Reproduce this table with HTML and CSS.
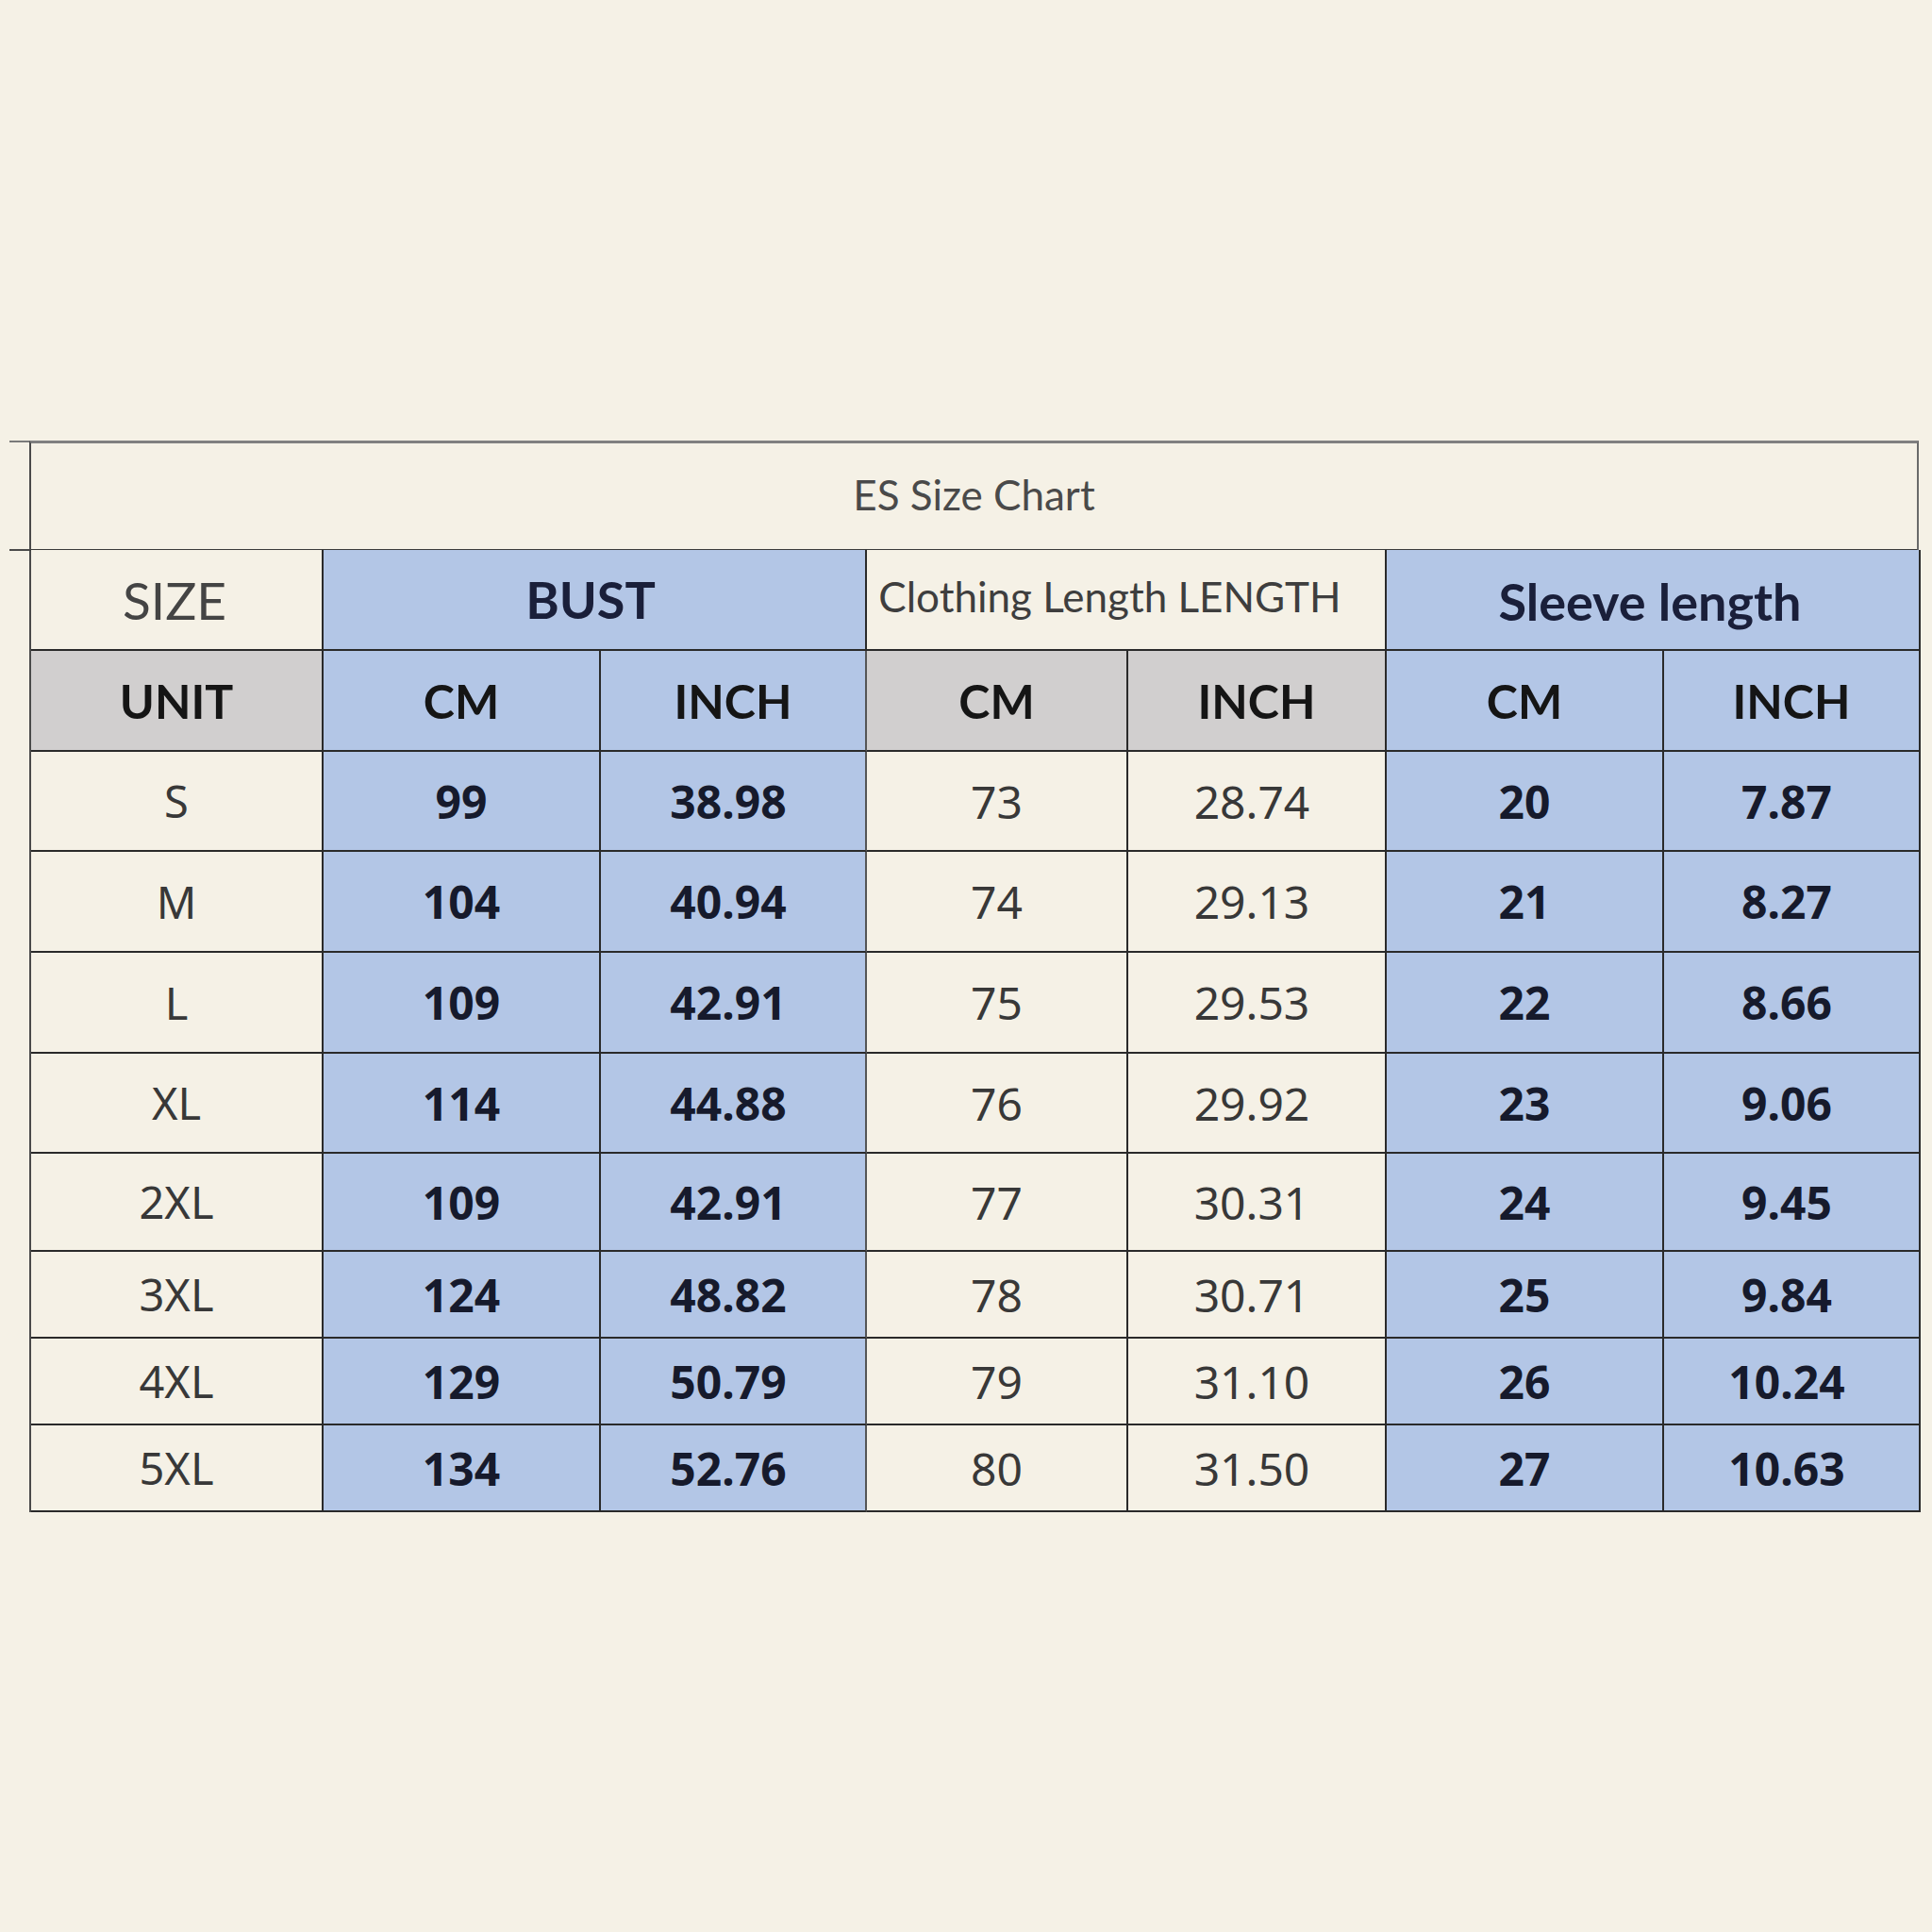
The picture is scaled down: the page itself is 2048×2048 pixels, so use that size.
FILE: index.html
```html
<!DOCTYPE html>
<html>
<head>
<meta charset="utf-8">
<link rel="stylesheet" href="styles.css">
</head>
<body>
<div class="page">
  <div class="chart">
    <div class="title-row">
      <div class="tick"></div>
      <div class="title">ES Size Chart</div>
    </div>
    <div class="grid">
      <div class="c cream h-size">SIZE</div>
      <div class="c blue span2 h-bust">BUST</div>
      <div class="c cream span2 h-len">Clothing Length LENGTH</div>
      <div class="c blue span2 h-sleeve">Sleeve length</div>

      <div class="c gray unit">UNIT</div>
      <div class="c blue unit">CM</div>
      <div class="c blue unit">INCH</div>
      <div class="c gray unit">CM</div>
      <div class="c gray unit">INCH</div>
      <div class="c blue unit">CM</div>
      <div class="c blue unit">INCH</div>

      <div class="c cream sz">S</div><div class="c blue b">99</div><div class="c blue b in">38.98</div><div class="c cream n">73</div><div class="c cream n in">28.74</div><div class="c blue b">20</div><div class="c blue b in">7.87</div>
      <div class="c cream sz">M</div><div class="c blue b">104</div><div class="c blue b in">40.94</div><div class="c cream n">74</div><div class="c cream n in">29.13</div><div class="c blue b">21</div><div class="c blue b in">8.27</div>
      <div class="c cream sz">L</div><div class="c blue b">109</div><div class="c blue b in">42.91</div><div class="c cream n">75</div><div class="c cream n in">29.53</div><div class="c blue b">22</div><div class="c blue b in">8.66</div>
      <div class="c cream sz">XL</div><div class="c blue b">114</div><div class="c blue b in">44.88</div><div class="c cream n">76</div><div class="c cream n in">29.92</div><div class="c blue b">23</div><div class="c blue b in">9.06</div>
      <div class="c cream sz">2XL</div><div class="c blue b">109</div><div class="c blue b in">42.91</div><div class="c cream n">77</div><div class="c cream n in">30.31</div><div class="c blue b">24</div><div class="c blue b in">9.45</div>
      <div class="c cream sz">3XL</div><div class="c blue b">124</div><div class="c blue b in">48.82</div><div class="c cream n">78</div><div class="c cream n in">30.71</div><div class="c blue b">25</div><div class="c blue b in">9.84</div>
      <div class="c cream sz">4XL</div><div class="c blue b">129</div><div class="c blue b in">50.79</div><div class="c cream n">79</div><div class="c cream n in">31.10</div><div class="c blue b">26</div><div class="c blue b in">10.24</div>
      <div class="c cream sz">5XL</div><div class="c blue b">134</div><div class="c blue b in">52.76</div><div class="c cream n">80</div><div class="c cream n in">31.50</div><div class="c blue b">27</div><div class="c blue b in">10.63</div>
    </div>
  </div>
</div>
</body>
</html>
```

FILE: styles.css
```css
html, body {
  margin: 0;
  padding: 0;
  background: #f5f1e6;
}
.page {
  width: 2048px;
  height: 2048px;
  background: #f5f1e6;
  padding-top: 467px;
  box-sizing: border-box;
}
.chart {
  margin-left: 10px;
  width: 2024px;
}
.title-row {
  display: flex;
  height: 117px;
}
.tick {
  width: 21px;
  border-top: 2px solid #7a7a7a;
  border-bottom: 2px solid #4a4a4a;
}
.title {
  flex: 1;
  border-top: 3px solid #808080;
  border-left: 2px solid #4a4a4a;
  border-right: 2px solid #6a6a6a;
  border-bottom: 2px solid #3a3a3a;
  display: flex;
  align-items: center;
  justify-content: center;
  font-family: Lato, "Open Sans", sans-serif;
  font-size: 44px;
  color: #4a4a4a;
  padding-bottom: 5px;
}
.grid {
  margin-left: 21px;
  display: grid;
  grid-template-columns: 310px 294px 282px 277px 274px 294px 272px;
  grid-template-rows: 107px 107px 106px 107px 107px 106px 104px 92px 92px 92px;
  border-left: 2px solid #4a4a4a;
  box-sizing: border-box;
  width: 2005px;
  margin-top: -1px;
}
.c {
  border-right: 2px solid #2a2a2a;
  border-bottom: 2px solid #2a2a2a;
  display: flex;
  align-items: center;
  justify-content: center;
}
.grid > .c:nth-child(7n) { border-right-color: #555; }
.span2 { grid-column: span 2; }
.cream { background: #f5f1e6; }
.blue { background: #b3c6e6; }
.gray { background: #d1cfcf; }

.h-size {
  font-family: Lato, sans-serif;
  font-size: 55px;
  color: #444;
  padding-right: 4px;
}
.h-bust {
  font-family: Lato, sans-serif;
  font-weight: bold;
  font-size: 54px;
  color: #1a1f3a;
  padding-right: 8px;
}
.h-len {
  font-family: Lato, sans-serif;
  font-size: 44px;
  color: #3e3e3e;
  padding-bottom: 8px;
  padding-right: 34px;
}
.h-sleeve {
  font-family: Lato, sans-serif;
  font-weight: bold;
  font-size: 54px;
  color: #1a1f3a;
  padding-top: 4px;
  padding-right: 6px;
}
.unit {
  font-family: Lato, sans-serif;
  font-weight: bold;
  font-size: 50px;
  color: #151515;
}
.sz, .n, .b {
  font-family: "Noto Sans", "Open Sans", sans-serif;
  font-size: 48px;
}
.sz {
  font-size: 47px;
  color: #383838;
}
.n {
  color: #383838;
}
.in { padding-right: 10px; }
.b {
  font-weight: bold;
  color: #161a2c;
}
```
